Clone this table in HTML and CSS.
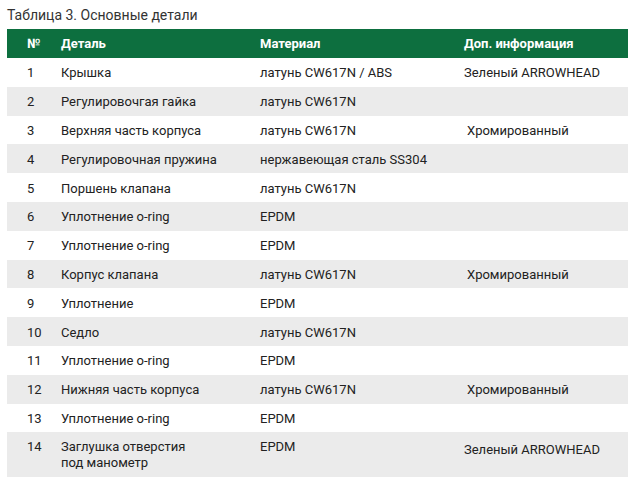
FILE: index.html
```html
<!DOCTYPE html>
<html lang="ru">
<head>
<meta charset="utf-8">
<link rel="stylesheet" href="styles.css">
</head>
<body>
<div class="page">
  <div class="caption">Таблица 3. Основные детали</div>
  <table class="parts">
    <thead>
      <tr><th class="c-num">№</th><th class="c-name">Деталь</th><th class="c-mat">Материал</th><th class="c-info">Доп. информация</th></tr>
    </thead>
    <tbody>
      <tr><td class="c-num">1</td><td>Крышка</td><td>латунь CW617N / ABS</td><td>Зеленый ARROWHEAD</td></tr>
      <tr><td class="c-num">2</td><td>Регулировочгая гайка</td><td>латунь CW617N</td><td></td></tr>
      <tr><td class="c-num">3</td><td>Верхняя часть корпуса</td><td>латунь CW617N</td><td class="ind">Хромированный</td></tr>
      <tr><td class="c-num">4</td><td>Регулировочная пружина</td><td>нержавеющая сталь SS304</td><td></td></tr>
      <tr><td class="c-num">5</td><td>Поршень клапана</td><td>латунь CW617N</td><td></td></tr>
      <tr><td class="c-num">6</td><td>Уплотнение o-ring</td><td>EPDM</td><td></td></tr>
      <tr><td class="c-num">7</td><td>Уплотнение o-ring</td><td>EPDM</td><td></td></tr>
      <tr><td class="c-num">8</td><td>Корпус клапана</td><td>латунь CW617N</td><td class="ind">Хромированный</td></tr>
      <tr><td class="c-num">9</td><td>Уплотнение</td><td>EPDM</td><td></td></tr>
      <tr><td class="c-num">10</td><td>Седло</td><td>латунь CW617N</td><td></td></tr>
      <tr><td class="c-num">11</td><td>Уплотнение o-ring</td><td>EPDM</td><td></td></tr>
      <tr><td class="c-num">12</td><td>Нижняя часть корпуса</td><td>латунь CW617N</td><td class="ind">Хромированный</td></tr>
      <tr><td class="c-num">13</td><td>Уплотнение o-ring</td><td>EPDM</td><td></td></tr>
      <tr class="tall"><td class="c-num">14</td><td>Заглушка отверстия<br>под манометр</td><td>EPDM</td><td class="mid">Зеленый ARROWHEAD</td></tr>
    </tbody>
  </table>
</div>
</body>
</html>
```
FILE: styles.css
```css
html, body {
  margin: 0;
  padding: 0;
  background: #ffffff;
}
.page {
  padding: 6px 12px 0 7px;
  font-family: Roboto, "Liberation Sans", Arial, sans-serif;
  color: #222222;
}
.caption {
  font-size: 14px;
  line-height: 18px;
  color: #333333;
  margin-bottom: 5px;
}
.parts {
  width: 621px;
  border-collapse: collapse;
  font-size: 13px;
}
.parts th {
  background: #0d6f3f;
  color: #ffffff;
  font-weight: bold;
  text-align: left;
  height: 29px;
  padding: 0;
  line-height: 16px;
}
.parts td {
  height: 28.8px;
  padding: 2px 0 0 0;
  box-sizing: border-box;
  line-height: 16px;
  vertical-align: middle;
}
.parts tbody tr:nth-child(even) td {
  background: #ebebeb;
}
.c-num {
  width: 54px;
  padding-left: 20px !important;
  box-sizing: border-box;
}
.c-name { width: 199px; }
.c-mat { width: 204px; }
.ind { padding-left: 3px !important; }
.parts tr.tall td {
  height: 45px;
  vertical-align: top;
  padding-top: 7px;
}
.parts tr.tall td.mid {
  padding-top: 10px;
}
```
